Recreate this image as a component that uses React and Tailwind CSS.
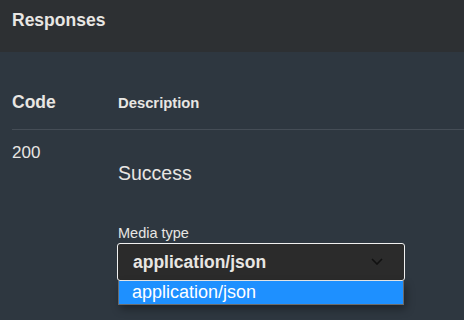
import React from 'react';

const App = () => {
  return (
    <div className="w-[464px] h-[320px] overflow-hidden bg-[#2e3740] text-[#e8e6e3] font-['Liberation_Sans',Arial,sans-serif]">
      {/* Section header */}
      <div className="h-[52px] bg-[#2d3033] px-3 pt-[12px]">
        <h4 className="text-[17.5px] font-bold leading-[17.5px]">Responses</h4>
      </div>

      {/* Table head */}
      <div className="pl-3 pt-[42px]">
        <div className="flex items-baseline pb-[16.5px] border-b border-[#454d56]">
          <div className="w-[106px] text-[17.5px] font-bold leading-[17.5px]">Code</div>
          <div className="text-[14.8px] font-bold leading-[17.5px]">Description</div>
        </div>
      </div>

      {/* Response row */}
      <div className="pl-3 flex items-start">
        <div className="w-[106px] pt-[14px] text-[17px] leading-[17px]">200</div>
        <div className="flex flex-col">
          <p className="pt-[33.5px] text-[19.5px] leading-[19.5px]">Success</p>
          <label className="mt-[42.5px] text-[14.5px] leading-[14.5px]">Media type</label>
          <div className="relative mt-[2.5px] -ml-[1px] w-[288px]">
            <div className="h-[38px] rounded-[3px] border border-[#f0f0f0] bg-[#2b2b2b] flex items-center justify-between pl-[15px] pr-[21px]">
              <span className="mt-[2px] text-[17.5px] font-bold leading-[17.5px]">application/json</span>
              <svg width="12" height="7" viewBox="0 0 12 7" fill="none">
                <path d="M1 1 6 6l5-5" stroke="#111" strokeWidth="1.6" />
              </svg>
            </div>
            <div className="ml-[1px] w-[286px] border border-t-0 border-[#6b6b6b] shadow-[2px_4px_8px_rgba(0,0,0,0.35)]">
              <div className="h-[23px] bg-[#1e90ff] text-white text-[18px] leading-[22px] pl-[13px]">application/json</div>
            </div>
          </div>
        </div>
      </div>
    </div>
  );
};

export default App;
